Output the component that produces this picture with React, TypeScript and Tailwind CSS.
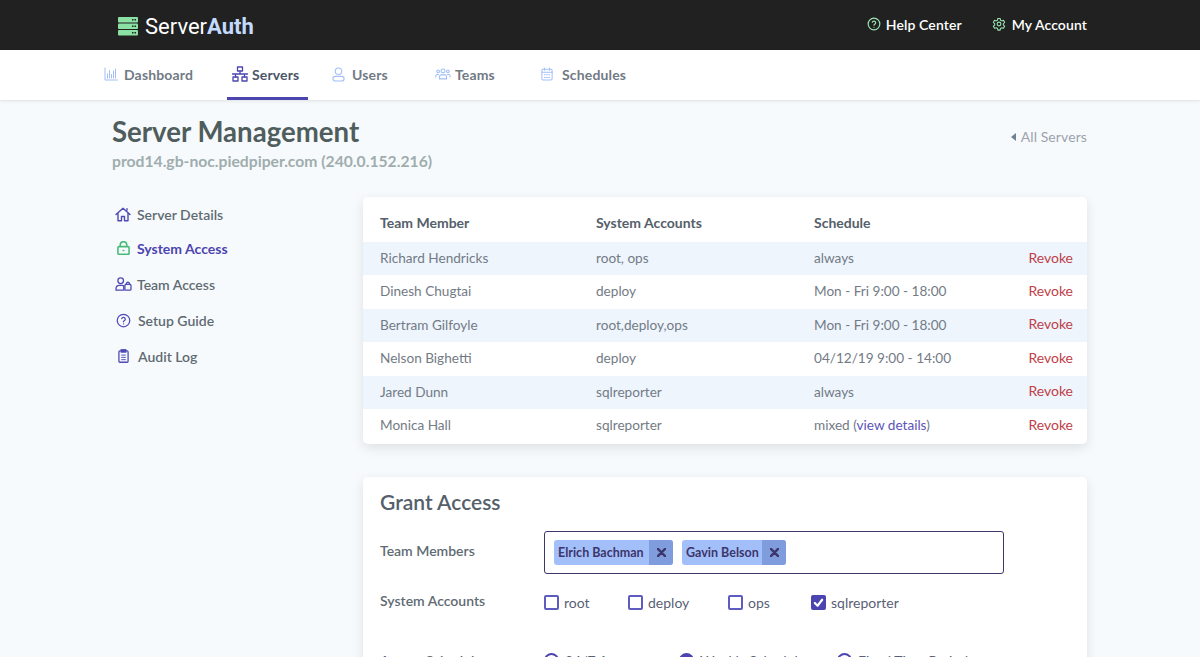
import React from "react";

const font = "font-['Lato','Noto_Sans',sans-serif]";

function Q({ className }: { className?: string }) {
  return (
    <svg viewBox="0 0 24 24" fill="none" stroke="currentColor" strokeWidth="2" strokeLinecap="round" strokeLinejoin="round" className={className}>
      <circle cx="12" cy="12" r="10" />
      <path d="M9.100 9a3 3 0 0 1 5.800 1c0 2-3 2.600-3 4" />
      <path d="M12 17.500h.01" />
    </svg>
  );
}

function Gear({ className }: { className?: string }) {
  return (
    <svg viewBox="0 0 24 24" fill="none" stroke="currentColor" strokeWidth="1.800" strokeLinecap="round" strokeLinejoin="round" className={className}>
      <path d="M10 2.500h4l.6 3 2.200 1.200 2.900-1 2 3.500-2.300 2v2.600l2.300 2-2 3.500-2.900-1-2.200 1.200-.6 3h-4l-.6-3-2.200-1.200-2.900 1-2-3.500 2.300-2v-2.600l-2.300-2 2-3.500 2.900 1 2.200-1.200z" />
      <circle cx="12" cy="12" r="3.200" />
    </svg>
  );
}

function Logo() {
  return (
    <svg viewBox="0 0 20 19" className="w-5 h-[19px] mt-[2px]">
      {[0, 6.500, 13].map((y) => (
        <g key={y}>
          <rect x="0" y={y} width="20" height="5.500" rx="1" fill="#8be0a4" />
          <rect x="14" y={y + 2} width="1.500" height="1.500" fill="#212121" />
          <rect x="16.500" y={y + 2} width="1.500" height="1.500" fill="#212121" />
        </g>
      ))}
    </svg>
  );
}

const ic = "#a3bffa";
function NavIcon({ name, color }: { name: string; color: string }) {
  const p = { fill: "none", stroke: color, strokeWidth: 1.500, strokeLinecap: "round" as const, strokeLinejoin: "round" as const };
  if (name === "chart")
    return (
      <svg viewBox="0 0 14 14" className="w-[14px] h-[14px]" {...p} strokeWidth={1}>
        <path d="M1 1v12h12.500M3.500 11V7M5.500 11V3.500M7.500 11V7.500M9.500 11V4M11.500 11V2" />
      </svg>
    );
  if (name === "net")
    return (
      <svg viewBox="0 0 16 16" className="w-4 h-4" {...p} strokeWidth={1.300}>
        <rect x="5.500" y="1" width="5" height="4" />
        <rect x="1" y="11" width="5" height="4" />
        <rect x="10" y="11" width="5" height="4" />
        <path d="M8 5v3M3.500 11V8h9v3M0.500 8h15" />
      </svg>
    );
  if (name === "user")
    return (
      <svg viewBox="0 0 14 16" className="w-[13px] h-[15px]" {...p} strokeWidth={1.200}>
        <circle cx="7" cy="4.500" r="3.500" />
        <rect x="1" y="10" width="12" height="5" rx="2.500" />
      </svg>
    );
  if (name === "team")
    return (
      <svg viewBox="0 0 18 13" className="w-[16px] h-[12px]" {...p} strokeWidth={1.200}>
        <circle cx="9" cy="3" r="2.200" />
        <circle cx="3.500" cy="3.500" r="1.500" />
        <circle cx="14.500" cy="3.500" r="1.500" />
        <path d="M5 12V9.500a2 2 0 0 1 2-2h4a2 2 0 0 1 2 2V12zM1 10V8.500a1.500 1.500 0 0 1 1.500-1.500H4M17 10V8.500A1.500 1.500 0 0 0 15.500 7H14" />
      </svg>
    );
  return (
    <svg viewBox="0 0 14 16" className="w-[12px] h-[14px]" {...p} strokeWidth={1.200}>
      <rect x="1" y="2.500" width="12" height="12.500" rx="1.500" />
      <path d="M1 6h12M4 1v2.500M10 1v2.500M4 9h1M6.500 9h1M9 9h1M4 12h1M6.500 12h1M9 12h1" />
    </svg>
  );
}

function Home({ c }: { c: string }) {
  return (
    <svg viewBox="0 0 16 15" className="w-4 h-[15px]" fill="none" stroke={c} strokeWidth="1.400" strokeLinejoin="round" strokeLinecap="round">
      <path d="M1 7.500 8 1.200l7 6.300M3 6v7.800h3.500V9.500h3v4.300H13V6M12 3V1.800" />
    </svg>
  );
}
function Lock({ c }: { c: string }) {
  return (
    <svg viewBox="0 0 14 15" className="w-[13px] h-[14px]" fill="none" stroke={c} strokeWidth="1.700">
      <rect x="1" y="6" width="12" height="8.300" rx="1" />
      <path d="M3.500 6V4.200a3.500 3.500 0 0 1 7 0V6" />
      <path d="M7 9.500v1.500" strokeWidth="2" />
    </svg>
  );
}
function UserLock({ c }: { c: string }) {
  return (
    <svg viewBox="0 0 18 15" className="w-[17px] h-[14px]" fill="none" stroke={c} strokeWidth="1.400">
      <circle cx="6" cy="4" r="3" />
      <path d="M1 14v-1.500A3.500 3.500 0 0 1 4.500 9h3c.7 0 1.300.2 1.800.5V14z" />
      <rect x="10.500" y="8" width="6.500" height="6" rx="1" />
      <path d="M12 8V7a1.800 1.800 0 0 1 3.500 0v1" />
    </svg>
  );
}
function Clip({ c }: { c: string }) {
  return (
    <svg viewBox="0 0 12 15" className="w-[11px] h-[14px]" fill="none" stroke={c} strokeWidth="1.400">
      <rect x="1" y="2" width="10" height="12.300" rx="1" />
      <rect x="3.500" y="0.700" width="5" height="2.500" fill={c} />
      <path d="M3.500 6.500h5M3.500 9h5M3.500 11.500h5" strokeWidth="1" />
    </svg>
  );
}

const rows = [
  ["Richard Hendricks", "root, ops", "always"],
  ["Dinesh Chugtai", "deploy", "Mon - Fri 9:00 - 18:00"],
  ["Bertram Gilfoyle", "root,deploy,ops", "Mon - Fri 9:00 - 18:00"],
  ["Nelson Bighetti", "deploy", "04/12/19 9:00 - 14:00"],
  ["Jared Dunn", "sqlreporter", "always"],
  ["Monica Hall", "sqlreporter", "mixed"],
];

function Tag({ name, w }: { name: string; w: string }) {
  return (
    <div className={`flex items-center h-[25px] rounded-[3px] bg-[#a3bffa] text-[#3c366b] overflow-hidden ${w}`}>
      <span className="flex-1 pl-[4px] pt-[1px] text-[12.500px] font-bold whitespace-nowrap">{name}</span>
      <span className="w-[24px] h-full bg-[#7f9cdd] flex items-center justify-center">
        <svg viewBox="0 0 10 10" className="w-[9px] h-[9px]" stroke="#3c366b" strokeWidth="2.600" strokeLinecap="round">
          <path d="M1 1l8 8M9 1 1 9" />
        </svg>
      </span>
    </div>
  );
}

function Check({ label, checked, w }: { label: string; checked?: boolean; w: string }) {
  return (
    <div className={`flex items-center gap-[5px] ${w}`}>
      {checked ? (
        <span className="w-[15px] h-[15px] rounded-[2px] bg-[#4c45b0] flex items-center justify-center">
          <svg viewBox="0 0 12 12" className="w-[11px] h-[11px]" fill="none" stroke="#fff" strokeWidth="2.400" strokeLinecap="round" strokeLinejoin="round">
            <path d="M2 6.500 5 9.500 10 3" />
          </svg>
        </span>
      ) : (
        <span className="w-[15px] h-[15px] rounded-[2px] border-2 border-[#5f5cc0] bg-white" />
      )}
      <span className="text-[14px] leading-none text-[#5a5f75]">{label}</span>
    </div>
  );
}

function Radio({ label, on, w }: { label: string; on?: boolean; w: string }) {
  return (
    <div className={`flex items-center gap-[6px] ${w}`}>
      <span className={`w-[15px] h-[15px] rounded-full border-2 border-[#4c45b0] ${on ? "bg-[#4c45b0]" : "bg-white"}`} />
      <span className="text-[14px] leading-none text-[#5a5f75]">{label}</span>
    </div>
  );
}

export default function App() {
  const nav = [
    { label: "Dashboard", icon: "chart", cls: "w-[137px] gap-[6px] pl-[14px]" },
    { label: "Servers", icon: "net", cls: "w-[81px] gap-[4px] pl-[5px]", active: true },
    { label: "Users", icon: "user", cls: "w-[127px] gap-[7px] pl-[24px]" },
    { label: "Teams", icon: "team", cls: "w-[106px] gap-[4px]" },
    { label: "Schedules", icon: "cal", cls: "w-[120px] gap-[9px]" },
  ];
  const side = [
    { label: "Server Details", icon: <Home c="#4f49b5" />, h: "h-[34px]", gap: "gap-[6px]", pl: "pl-[3px]" },
    { label: "System Access", icon: <Lock c="#48bb78" />, h: "h-[34px]", gap: "gap-[7px]", pl: "pl-[5px]", active: true },
    { label: "Team Access", icon: <UserLock c="#4f49b5" />, h: "h-[38px]", gap: "gap-[5px]", pl: "pl-[3px]" },
    { label: "Setup Guide", icon: <Q className="w-[15px] h-[15px] text-[#4f49b5]" />, h: "h-[34px]", gap: "gap-[7px]", pl: "pl-[4px]" },
    { label: "Audit Log", icon: <Clip c="#4f49b5" />, h: "h-[38px]", gap: "gap-[9px]", pl: "pl-[6px]" },
  ];
  return (
    <div className={`h-[657px] overflow-hidden bg-[#f7fafc] ${font}`}>
      <header className="h-[50px] bg-[#212121] flex items-center justify-between pl-[118px] pr-[113px]">
        <div className="flex items-center gap-[7px]">
          <Logo />
          <span className="font-['Roboto',sans-serif] text-[22px] text-white leading-none mt-[3px]">
            Server<span className="font-bold text-[#c3dafe]">Auth</span>
          </span>
        </div>
        <div className="flex items-center gap-[30px] text-white text-[14px] font-semibold tracking-[0.1px] pb-[2px]">
          <span className="flex items-center gap-[5px]"><Q className="w-[14px] h-[14px] text-[#9ae6b4]" />Help Center</span>
          <span className="flex items-center gap-[6px]"><Gear className="w-[14px] h-[14px] text-[#9ae6b4]" />My Account</span>
        </div>
      </header>
      <nav className="h-[50px] bg-white shadow-[0_1px_3px_rgba(0,0,0,0.1)] flex pl-[90px] relative">
        {nav.map((n) => (
          <div key={n.label} className={`${n.cls} h-full flex items-center text-[14px] font-bold tracking-[0.15px] ${n.active ? "text-[#4a5568] border-b-[3px] border-[#4c45b0] pt-[1px]" : "text-[#717a85] pb-[2px]"}`}>
            <NavIcon name={n.icon} color={n.active ? "#4c45b0" : ic} />
            <span>{n.label}</span>
          </div>
        ))}
      </nav>
      <main className="pl-[112px] pr-[113px]">
        <div className="flex items-start justify-between h-[97px]">
          <div>
            <h1 className="text-[27.600px] leading-[34px] font-bold text-[#4f5d5c] mt-[15px]">Server Management</h1>
            <p className="text-[15.700px] leading-[24px] font-bold text-[#9fadae] mt-0">prod14.gb-noc.piedpiper.com (240.0.152.216)</p>
          </div>
          <div className="flex items-center gap-[5px] text-[14px] tracking-[0.1px] text-[#9ca3af] mt-[26px]">
            <span className="w-0 h-0 border-y-[4px] border-y-transparent border-r-[5px] border-r-[#718096]" />
            All Servers
          </div>
        </div>
        <div className="flex">
          <aside className="w-[251px] shrink-0 text-[14px] font-semibold text-[#5f6b73]">
            {side.map((s) => (
              <div key={s.label} className={`flex items-center ${s.h} ${s.gap} ${s.pl} ${s.active ? "text-[#4c45b0] font-bold" : ""}`}>
                {s.icon}
                <span>{s.label}</span>
              </div>
            ))}
          </aside>
          <div className="flex-1">
            <section className="bg-white rounded-[5px] shadow-[0_4px_12px_rgba(0,0,0,0.1)] overflow-hidden h-[247px] text-[13.600px] text-[#737b85]">
              <div className="h-[45px] flex items-center pt-[6px] px-[17px] text-[14px] font-bold text-[#55606a]">
                <span className="w-[216px]">Team Member</span>
                <span className="w-[218px]">System Accounts</span>
                <span>Schedule</span>
              </div>
              {rows.map((r, i) => (
                <div key={r[0]} className={`h-[33.400px] flex items-center pb-[1px] pl-[17px] pr-[14px] ${i % 2 === 0 ? "bg-[#eef5fd]" : ""}`}>
                  <span className="w-[216px]">{r[0]}</span>
                  <span className="w-[218px]">{r[1]}</span>
                  <span className="flex-1">
                    {r[2]}
                    {r[2] === "mixed" && (
                      <> (<span className="text-[#5a55b8]">view details</span>)</>
                    )}
                  </span>
                  <span className="text-[14px] text-[#bf4048] pb-[2px]">Revoke</span>
                </div>
              ))}
            </section>
            <section className="mt-[33px] bg-white rounded-[5px] shadow-[0_4px_12px_rgba(0,0,0,0.1)] h-[300px] px-[17px] pt-[11px]">
              <h2 className="text-[21px] leading-[28px] font-semibold text-[#55606a]">Grant Access</h2>
              <div className="flex items-center mt-[15px]">
                <span className="w-[164px] text-[14px] font-semibold text-[#5f6b73] pb-[5px]">Team Members</span>
                <div className="w-[460px] h-[43px] rounded-[3px] border border-[#3c366b] flex items-center gap-[9px] px-[9px]">
                  <Tag name="Elrich Bachman" w="w-[119px]" />
                  <Tag name="Gavin Belson" w="w-[104px]" />
                </div>
              </div>
              <div className="flex items-center h-[21px] mt-[18px]">
                <span className="w-[164px] text-[14px] font-semibold text-[#5f6b73] pb-[4px]">System Accounts</span>
                <Check label="root" w="w-[84px]" />
                <Check label="deploy" w="w-[100px]" />
                <Check label="ops" w="w-[83px]" />
                <Check label="sqlreporter" checked w="w-[120px]" />
              </div>
              <div className="flex items-center mt-[37px]">
                <span className="w-[164px] text-[14px] font-semibold text-[#5f6b73]">Access Schedule</span>
                <Radio label="24/7 Access" w="w-[135px]" />
                <Radio label="Weekly Schedule" w="w-[158px]" on />
                <Radio label="Fixed Time Period" w="w-[150px]" />
              </div>
            </section>
          </div>
        </div>
      </main>
    </div>
  );
}
